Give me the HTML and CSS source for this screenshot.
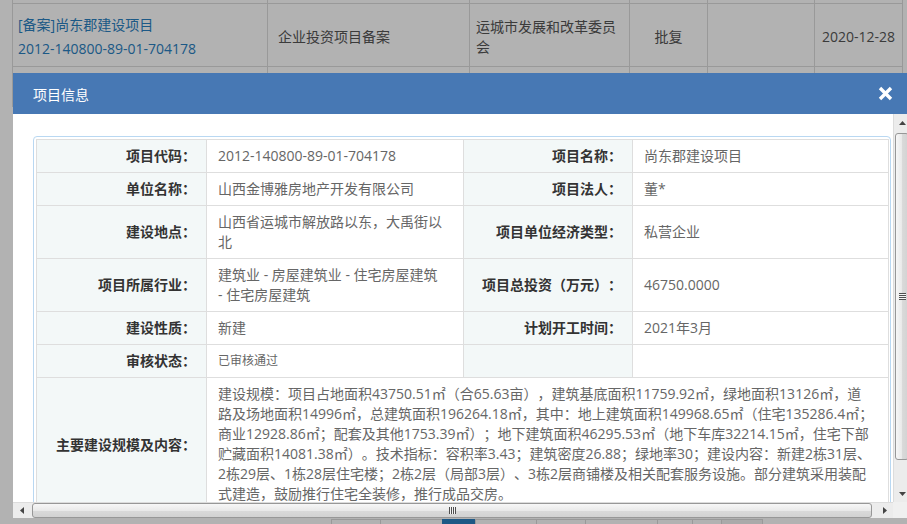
FILE: index.html
```html
<!DOCTYPE html>
<html lang="zh-CN">
<head>
<meta charset="utf-8">
<title>项目信息</title>
<link rel="stylesheet" href="styles.css">
</head>
<body>
<div class="page">
  <table class="list">
    <colgroup>
      <col class="w1"><col class="w2"><col class="w3"><col class="w4"><col class="w5"><col class="w6">
    </colgroup>
    <tr class="prev"><td></td><td></td><td></td><td></td><td></td><td></td></tr>
    <tr class="item">
      <td class="c-name"><a href="#">[备案]尚东郡建设项目<br>2012-140800-89-01-704178</a></td>
      <td class="c-type">企业投资项目备案</td>
      <td class="c-dept">运城市发展和改革委员会</td>
      <td class="c-center">批复</td>
      <td></td>
      <td class="c-center">2020-12-28</td>
    </tr>
    <tr class="next"><td></td><td></td><td></td><td></td><td></td><td></td></tr>
  </table>
  <div class="pager">
    <span class="pg w48"></span><span class="pg w62"></span><span class="pg cur"></span><span class="pg w61"></span><span class="pg w49"></span><span class="pg w72"></span><span class="pg w35"></span><span class="pg w29"></span><span class="pg inp"></span>
  </div>
</div>

<div class="mask"></div>

<div class="dialog">
  <div class="dialog-head">
    <span class="dialog-title">项目信息</span>
    <a class="dialog-close" href="#"><svg width="15" height="15" viewBox="0 0 15 15"><path d="M2 2L13 13M13 2L2 13" stroke="#fff" stroke-width="3.4"/></svg></a>
  </div>
  <div class="dialog-body">
    <div class="viewport">
      <div class="info-box">
        <table class="info">
          <colgroup><col class="k"><col class="v"><col class="k2"><col class="v2"></colgroup>
          <tr>
            <th>项目代码：</th><td>2012-140800-89-01-704178</td>
            <th>项目名称：</th><td>尚东郡建设项目</td>
          </tr>
          <tr>
            <th>单位名称：</th><td>山西金博雅房地产开发有限公司</td>
            <th>项目法人：</th><td>董*</td>
          </tr>
          <tr>
            <th>建设地点：</th><td>山西省运城市解放路以东，大禹街以北</td>
            <th>项目单位经济类型：</th><td>私营企业</td>
          </tr>
          <tr>
            <th>项目所属行业：</th><td>建筑业 - 房屋建筑业 - 住宅房屋建筑<br>- 住宅房屋建筑</td>
            <th>项目总投资（万元）：</th><td>46750.0000</td>
          </tr>
          <tr>
            <th>建设性质：</th><td>新建</td>
            <th>计划开工时间：</th><td>2021年3月</td>
          </tr>
          <tr>
            <th>审核状态：</th><td class="small">已审核通过</td>
            <th></th><td></td>
          </tr>
          <tr>
            <th>主要建设规模及内容：</th>
            <td colspan="3" class="long">建设规模：项目占地面积43750.51㎡（合65.63亩），建筑基底面积11759.92㎡，绿地面积13126㎡，道<br>路及场地面积14996㎡，总建筑面积196264.18㎡，其中：地上建筑面积149968.65㎡（住宅135286.4㎡；<br>商业12928.86㎡；配套及其他1753.39㎡）；地下建筑面积46295.53㎡（地下车库32214.15㎡，住宅下部<br>贮藏面积14081.38㎡）。技术指标：容积率3.43；建筑密度26.88；绿地率30；建设内容：新建2栋31层、<br>2栋29层、1栋28层住宅楼；2栋2层（局部3层）、3栋2层商铺楼及相关配套服务设施。部分建筑采用装配<br>式建造，鼓励推行住宅全装修，推行成品交房。</td>
          </tr>
        </table>
      </div>
    </div>
    <div class="vbar">
      <div class="sb-btn"><svg width="7" height="4" viewBox="0 0 7 4"><path d="M0 4L3.5 0L7 4Z" fill="#444"/></svg></div>
      <div class="vtrack"><div class="vthumb"><span class="vgrip"></span></div></div>
      <div class="sb-btn"><svg width="7" height="4" viewBox="0 0 7 4"><path d="M0 0L7 0L3.5 4Z" fill="#444"/></svg></div>
    </div>
    <div class="hbar">
      <div class="sb-btn"><svg width="4" height="7" viewBox="0 0 4 7"><path d="M4 0L4 7L0 3.5Z" fill="#444"/></svg></div>
      <div class="htrack"><div class="hthumb"><span class="hgrip"></span></div></div>
      <div class="sb-btn"><svg width="4" height="7" viewBox="0 0 4 7"><path d="M0 0L4 3.5L0 7Z" fill="#444"/></svg></div>
    </div>
    <div class="corner"></div>
  </div>
</div>
</body>
</html>
```

FILE: styles.css
```css
* { box-sizing: border-box; }
html, body { margin: 0; padding: 0; }
body {
  width: 907px;
  height: 524px;
  overflow: hidden;
  background: #fff;
  font-family: "Open Sans", "Noto Sans CJK SC", sans-serif;
  font-size: 14px;
  color: #555;
  text-spacing-trim: space-all;
}

/* underlying list page */
.page {
  height: 524px;
  display: flex;
  flex-direction: column;
}
.list {
  margin: -27px 0 0 12px;
  width: 890px;
  border-collapse: collapse;
  table-layout: fixed;
}
.list .w1 { width: 255px; }
.list .w2 { width: 202px; }
.list .w3 { width: 160px; }
.list .w4 { width: 78px; }
.list .w5 { width: 107px; }
.list .w6 { width: 88px; }
.list td {
  border: 1px solid #dcdcdc;
  padding: 0;
  vertical-align: middle;
}
.list .prev td { height: 30px; }
.list .item td { height: 63px; padding-top: 3px; line-height: 20px; }
.list .next td { height: 40px; }
.list .c-name { padding-left: 5px; line-height: 24px !important; }
.list .c-name a { color: #2a80c0; text-decoration: none; }
.list .c-type { padding-left: 10px; }
.list .c-dept { padding-left: 6px; padding-right: 8px; }
.list .c-center { text-align: center; }

.pager {
  margin-top: auto;
  height: 5px;
  display: flex;
  padding-left: 331px;
}
.pg { height: 5px; border-left: 1px solid #dcdcdc; border-top: 1px solid #dcdcdc; }
.w48 { width: 49px; }
.w62 { width: 62px; }
.cur { width: 33px; background: #2a7fbf; border-color: #2a7fbf; }
.w61 { width: 61px; }
.w49 { width: 49px; }
.w72 { width: 72px; }
.w35 { width: 35px; }
.w29 { width: 29px; }
.inp { width: 42px; border-right: 1px solid #dcdcdc; background: #f4f4f4; }

.mask {
  position: fixed;
  inset: 0;
  background: rgba(0, 0, 0, 0.3);
}

/* dialog */
.dialog {
  position: absolute;
  left: 13px;
  top: 73px;
  width: 897px;
  background: #fff;
}
.dialog-head {
  height: 41px;
  background: #4778b4;
  display: flex;
  align-items: center;
  justify-content: space-between;
  padding: 0 17px 0 20px;
}
.dialog-title {
  color: #fff;
  font-size: 14px;
  font-family: "Noto Sans CJK SC", sans-serif;
}
.dialog-close { display: flex; width: 15px; height: 15px; }

.dialog-body {
  display: grid;
  grid-template-columns: 880px 17px;
  grid-template-rows: 388px 16px;
}
.viewport {
  overflow: hidden;
  padding: 22px 20px 0 20px;
}
.info-box {
  width: 858px;
  border: 1px solid #b9d8f2;
  border-radius: 4px;
  padding: 2px;
}
.info {
  width: 852px;
  border-collapse: collapse;
  table-layout: fixed;
}
.info .k { width: 170px; }
.info .v { width: 257px; }
.info .k2 { width: 169px; }
.info .v2 { width: 256px; }
.info th, .info td {
  border: 1px solid #dedede;
  line-height: 20px;
  vertical-align: middle;
}
.info th {
  background: #f3f8f8;
  color: #333;
  font-weight: bold;
  text-align: right;
  padding: 6px 10px 6px 6px;
  height: 33px;
}
.info td {
  color: #666;
  padding: 6px 11px;
  text-align: left;
}
.info td.small { font-size: 12px; }
.info td.long { padding: 6px 2px 8px 11px; white-space: nowrap; }

/* scrollbars */
.vbar {
  display: flex;
  flex-direction: column;
  background: #ececec;
  border-left: 1px solid #dcdcdc;
}
.hbar {
  display: flex;
  background: #ececec;
  border-top: 1px solid #dcdcdc;
}
.corner { background: #f0f0f0; }
.sb-btn {
  flex: 0 0 17px;
  height: 17px;
  display: flex;
  align-items: center;
  justify-content: center;
}
.vbar .sb-btn { width: 16px; }
.hbar .sb-btn { height: 15px; }
.vtrack { flex: 1; padding: 2px 1px 0 1px; }
.vthumb {
  height: 327px;
  border: 1px solid #979797;
  border-radius: 3px;
  background: linear-gradient(to right, #f7f7f7, #e9e9e9 50%, #dadada 51%, #d2d2d2);
  display: flex;
  align-items: center;
  justify-content: center;
}
.vgrip {
  width: 7px;
  height: 7px;
  background: repeating-linear-gradient(to bottom, #4f4f4f 0 1px, #f4f4f4 1px 2px);
}
.htrack { flex: 1; padding: 0 4px 0 2px; }
.hthumb {
  height: 15px;
  border: 1px solid #979797;
  border-radius: 3px;
  background: linear-gradient(to bottom, #f7f7f7, #e9e9e9 50%, #dadada 51%, #d2d2d2);
  display: flex;
  align-items: center;
  justify-content: center;
}
.hgrip {
  width: 7px;
  height: 7px;
  background: repeating-linear-gradient(to right, #4f4f4f 0 1px, #f4f4f4 1px 2px);
}
```
